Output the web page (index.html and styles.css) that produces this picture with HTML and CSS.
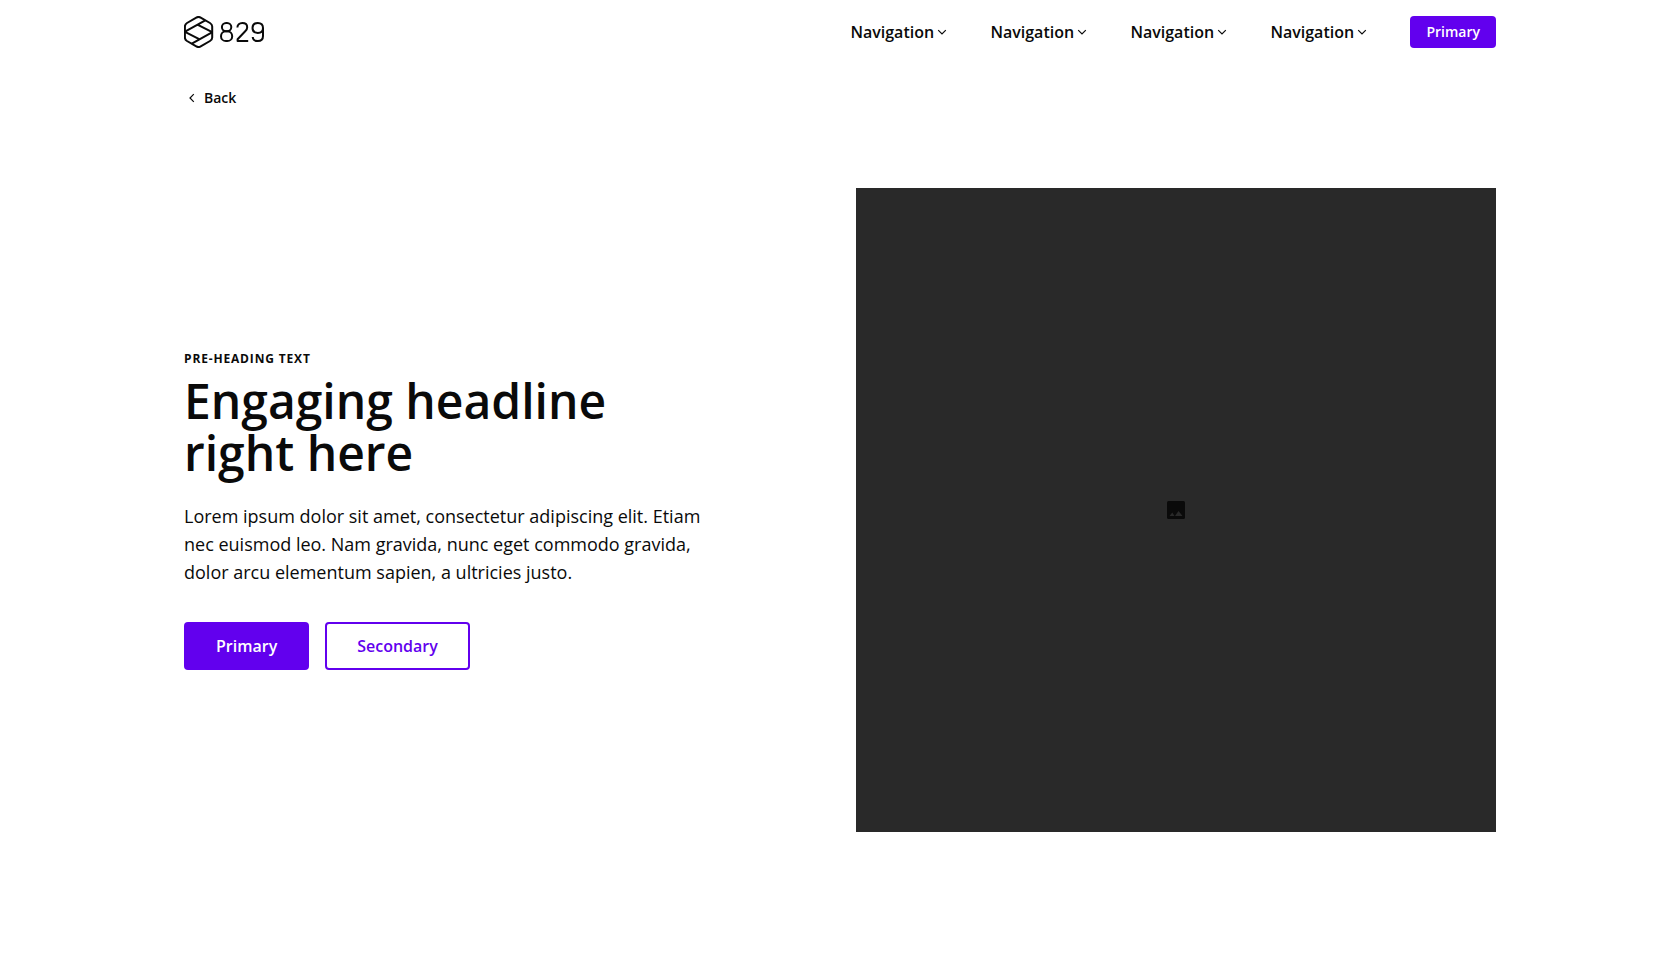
FILE: index.html
```html
<!DOCTYPE html>
<html lang="en">
<head>
<meta charset="utf-8">
<meta name="viewport" content="width=device-width, initial-scale=1">
<title>829</title>
<link rel="stylesheet" href="styles.css">
</head>
<body>
<header class="header container">
  <a class="logo" href="#" aria-label="829">
    <svg width="81" height="32" viewBox="0 0 81 32" fill="none" stroke="currentColor" stroke-width="2" stroke-linejoin="round">
      <path d="M12.3 1.6Q14.5 .3 16.7 1.6L26 7Q28.2 8.3 28.2 10.6V21.4Q28.2 23.7 26 25L16.7 30.4Q14.5 31.7 12.3 30.4L3 25Q.9 23.7.9 21.4V10.6Q.9 8.3 3 7Z"/>
      <path d="M1 15.6L21.3 4.3M13.4 8.7L28.2 16.2M28 16.4L7.8 27.7M15.7 23.3L1 15.8"/>
      <g>
        <rect x="37.9" y="6.9" width="9.4" height="8.4" rx="4.2"/>
        <rect x="37" y="15.3" width="11.2" height="9.8" rx="4.9"/>
        <path d="M53.4 11.6C53.4 8.7 55.5 6.9 58.3 6.9C61.2 6.9 63.2 8.6 63.2 11.2C63.2 12.9 62.4 14.1 61.2 15.3L53.6 23.2V25.1H64.2"/>
        <path d="M79 12V20C79 23.2 76.9 25.1 73.8 25.1C70.8 25.1 68.9 23.6 68.7 21M79 12C79 15 76.9 16.9 73.8 16.9C70.6 16.9 68.5 15 68.5 12C68.5 8.9 70.6 6.9 73.8 6.9C76.9 6.9 79 8.9 79 12Z"/>
      </g>
    </svg>
  </a>
  <nav class="nav" aria-label="Main">
    <button class="nav-item" type="button">Navigation<svg class="chevron" viewBox="0 0 16 16"><path d="M4.2 6.2L8 10L11.8 6.2"/></svg></button>
    <button class="nav-item" type="button">Navigation<svg class="chevron" viewBox="0 0 16 16"><path d="M4.2 6.2L8 10L11.8 6.2"/></svg></button>
    <button class="nav-item" type="button">Navigation<svg class="chevron" viewBox="0 0 16 16"><path d="M4.2 6.2L8 10L11.8 6.2"/></svg></button>
    <button class="nav-item" type="button">Navigation<svg class="chevron" viewBox="0 0 16 16"><path d="M4.2 6.2L8 10L11.8 6.2"/></svg></button>
    <button class="button button-primary button-small" type="button">Primary</button>
  </nav>
</header>
<main class="container">
  <a class="back" href="#"><svg class="chevron" viewBox="0 0 16 16"><path d="M9.8 4.2L6 8L9.8 11.8"/></svg>Back</a>
  <section class="hero">
    <div class="hero-copy">
      <p class="preheading">PRE-HEADING TEXT</p>
      <h1 class="headline">Engaging headline right here</h1>
      <p class="lead">Lorem ipsum dolor sit amet, consectetur adipiscing elit. Etiam nec euismod leo. Nam gravida, nunc eget commodo gravida, dolor arcu elementum sapien, a ultricies justo.</p>
      <div class="actions">
        <button class="button button-primary" type="button">Primary</button>
        <button class="button button-secondary" type="button">Secondary</button>
      </div>
    </div>
    <div class="hero-media" role="img" aria-label="Image placeholder">
      <svg width="24" height="24" viewBox="0 0 24 24"><rect x="3" y="3" width="18" height="18" rx="1.5" fill="#0a0a0a"/><path d="M5.5 18L8.3 14.6L10.5 18ZM11 18L14.5 13L18.5 18Z" fill="#292929"/></svg>
    </div>
  </section>
</main>
</body>
</html>
```
FILE: styles.css
```css
* { box-sizing: border-box; }

body {
  margin: 0;
  background: #fff;
  color: #0a0a0a;
  font-family: "Open Sans", sans-serif;
  font-size: 16px;
  line-height: 24px;
}

.container {
  max-width: 1344px;
  margin: 0 auto;
  padding: 0 16px;
}

.header {
  display: flex;
  align-items: center;
  justify-content: space-between;
  min-height: 64px;
}

.logo { display: flex; color: inherit; }

.nav { display: flex; align-items: center; gap: 40px; }

.nav-item {
  display: flex;
  align-items: center;
  min-width: 100px;
  padding: 0;
  border: 0;
  background: none;
  color: inherit;
  font: 600 16px/24px "Open Sans", sans-serif;
  cursor: pointer;
}

.chevron {
  width: 16px;
  height: 16px;
  fill: none;
  stroke: currentColor;
  stroke-width: 1.2;
}

.button {
  padding: 12px 32px;
  border: 0;
  border-radius: 4px;
  font: 600 16px/24px "Open Sans", sans-serif;
  cursor: pointer;
}

.button-primary { background: #6200ee; color: #fff; }

.button-secondary {
  padding: 10px 30px;
  border: 2px solid #6200ee;
  background: #fff;
  color: #6200ee;
}

.button-small { padding: 6px 16px; font-size: 14px; line-height: 20px; }

.back {
  display: inline-flex;
  align-items: center;
  gap: 4px;
  margin-top: 24px;
  color: inherit;
  font-size: 14px;
  font-weight: 600;
  line-height: 20px;
  text-decoration: none;
}

.hero {
  display: grid;
  grid-template-columns: 1fr 1fr;
  align-items: center;
  gap: 32px;
  padding: 76px 0;
}

.hero-copy { max-width: 536px; }

.preheading {
  margin: 0 0 8px;
  font-size: 12px;
  font-weight: 700;
  line-height: 16px;
  letter-spacing: 0.07em;
}

.headline {
  max-width: 500px;
  margin: 0 0 23px;
  font-size: 48px;
  font-weight: 600;
  line-height: 52px;
}

.lead { margin: 0; font-size: 18px; line-height: 28px; }

.actions { display: flex; gap: 16px; margin-top: 36px; }

.hero-media {
  display: grid;
  place-items: center;
  min-height: 644px;
  background: #292929;
}
```
